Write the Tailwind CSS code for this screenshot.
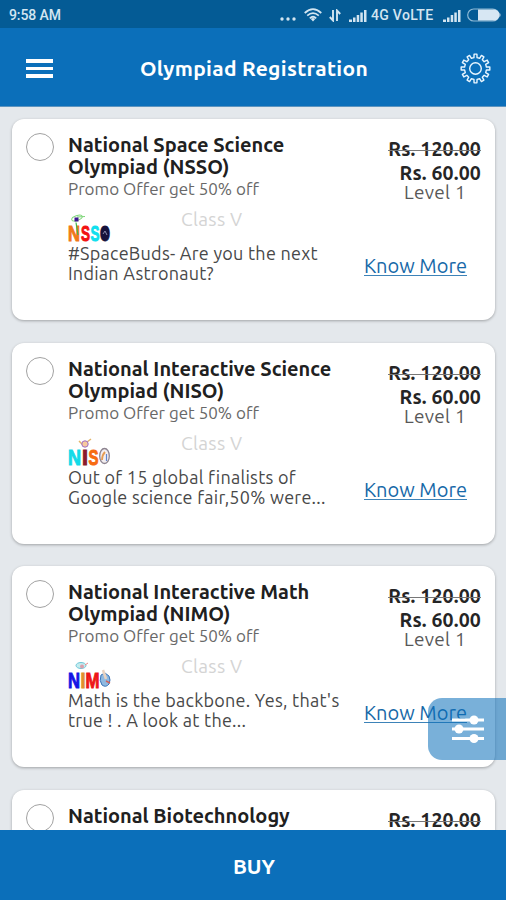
<!DOCTYPE html>
<html lang="en">
<head>
  <meta charset="UTF-8" />
  <meta name="viewport" content="width=device-width, initial-scale=1.0"/>
  <title>Olympiad Registration</title>
  <script src="https://cdn.jsdelivr.net/npm/@tailwindcss/browser@4"></script>
</head>
<body class="h-[900px] w-[506px] overflow-hidden bg-[#e4e8ec] font-['Ubuntu','Noto_Sans',sans-serif] flex flex-col">

  <!-- Status bar -->
  <div class="h-[28px] shrink-0 bg-[#045b95] text-[#d3e5f1] flex items-center justify-between pl-[9px] pr-[5px] pt-[2px] font-['Roboto',sans-serif] font-medium text-[14px]">
    <span class="tracking-[-0.1px]">9:58 AM</span>
    <div class="flex items-center">
      <svg class="w-[16px] h-[14px] mr-[8px]" viewBox="0 0 16 14" fill="currentColor">
        <circle cx="2" cy="11" r="1.7"/><circle cx="8" cy="11" r="1.7"/><circle cx="14" cy="11" r="1.7"/>
      </svg>
      <svg class="w-[18px] h-[14px] mr-[7px]" viewBox="0 0 18 14" fill="none" stroke="currentColor" stroke-width="1.7">
        <path d="M.7 5Q9-2.6 17.3 5M3.2 7.7Q9 2.4 14.8 7.7M5.8 10.3Q9 7.2 12.2 10.3"/>
        <path d="M9 13.5L6.8 11Q9 9.2 11.2 11z" fill="currentColor" stroke="none"/>
      </svg>
      <svg class="w-[12px] h-[13px] mr-[8px]" viewBox="0 0 12 13" fill="none" stroke="currentColor" stroke-width="1.9">
        <path d="M4 1V11.5L.8 8M8 12V1.5L11.2 5"/>
      </svg>
      <svg class="w-[18px] h-[13px] mr-[4px]" viewBox="0 0 18 13" fill="currentColor">
        <path d="M0 10.5h3V13H0zM4 8.5h2.5V13H4zM7.7 6h2.5v7H7.7zM11.3 3.5h2.5V13h-2.5zM15 1h2.5v12H15z"/>
      </svg>
      <span class="w-[65px] whitespace-nowrap tracking-[0.3px]">4G VoLTE</span>
      <svg class="w-[18px] h-[13px] mr-[6px] ml-[7px]" viewBox="0 0 18 13" fill="currentColor">
        <path d="M0 10.5h3V13H0zM4 8.5h2.5V13H4zM7.7 6h2.5v7H7.7zM11.3 3.5h2.5V13h-2.5zM15 1h2.5v12H15z"/>
      </svg>
      <svg class="w-[34px] h-[14px]" viewBox="0 0 34 14">
        <rect x=".7" y="1" width="31" height="12" rx="6" fill="none" stroke="#8db9d6" stroke-width="1.2"/>
        <path d="M11 1.5h16a5.5 5.5 0 0 1 0 11H11z" fill="#d7e7f3"/>
        <path d="M32.5 4.5q2 2.5 0 5z" fill="#d7e7f3"/>
      </svg>
    </div>
  </div>

  <!-- App bar -->
  <header class="h-[79px] shrink-0 bg-[#0b6fba] text-white flex items-center justify-between pl-[26px] pr-[15px] pt-[2px] border-b border-[#5d94bf]">
    <div class="w-[27px] flex flex-col gap-[4px]">
      <span class="h-[4px] bg-white"></span>
      <span class="h-[3px] bg-white"></span>
      <span class="h-[4px] bg-white"></span>
    </div>
    <h1 class="text-[21px] font-bold whitespace-nowrap tracking-[0.3px] -ml-[5px] pt-[2px]">Olympiad Registration</h1>
    <svg class="w-[31px] h-[31px]" viewBox="-15.5 -15.5 31 31" fill="none" stroke="#e9f6ff" stroke-width="1.4" stroke-linejoin="round">
      <path id="gear-teeth"/>
      <circle r="5.8"/>
    </svg>
  </header>

  <!-- Olympiad list -->
  <main id="list" class="flex-1 min-h-0 overflow-hidden pl-[12px] pr-[11px] pt-[12px] flex flex-col gap-[22.6px]"></main>

  <!-- Filter button -->
  <div class="absolute left-[428px] top-[698px] w-[78px] h-[62px] rounded-l-[14px] bg-[#0b6fba]/55">
    <svg class="absolute left-[24px] top-[17px] w-[32px] h-[29px]" viewBox="0 0 32 29" fill="white">
      <path d="M0 3.5h32v3H0zM0 12.5h32v3H0zM0 22h32v3H0z"/>
      <circle cx="22" cy="5" r="4.5"/><circle cx="7" cy="14" r="4.5"/><circle cx="22" cy="23.5" r="4.5"/>
    </svg>
  </div>

  <!-- Buy -->
  <button class="h-[70px] shrink-0 bg-[#0b6fba] text-white text-[21px] font-bold pt-[3px] pl-[2px]">BUY</button>

  <script>
    const logos = {
      nsso: `
        <g fill="none" stroke="#7fd67a" stroke-width="1"><ellipse cx="9" cy="4" rx="5.5" ry="2.4" transform="rotate(-20 9 4)"/><path d="M9 3L17 2.5"/></g>
        <text x="0" y="26.5" textLength="12" lengthAdjust="spacingAndGlyphs" fill="#f07818" stroke="#f07818">N</text>
        <text x="13" y="26.5" textLength="9" lengthAdjust="spacingAndGlyphs" fill="#f31212" stroke="#f31212">S</text>
        <text x="22.5" y="26.5" textLength="9" lengthAdjust="spacingAndGlyphs" fill="#10e0ee" stroke="#10e0ee">S</text>
        <text x="32" y="26.5" textLength="10" lengthAdjust="spacingAndGlyphs" fill="#17123c" stroke="#17123c">O</text>
        <rect x="6.5" y="3.5" width="4" height="4" fill="#3a1690"/>
        <path d="M8 8.500L10 21" stroke="#3cb54a" stroke-width="1.2"/>
        <ellipse cx="37" cy="18.5" rx="4" ry="6.5" fill="#17123c"/><path d="M35 20l2-3 2 4" stroke="#8c8cae" fill="none"/>`,
      niso: `
        <path d="M11 3l4 4 8-6" stroke="#e3b56a" stroke-width="1.5" fill="none"/>
        <text x="0" y="26.5" textLength="13" lengthAdjust="spacingAndGlyphs" fill="#12dbe8" stroke="#12dbe8">N</text>
        <text x="14" y="26.5" textLength="6" lengthAdjust="spacingAndGlyphs" fill="#8a1c2c" stroke="#8a1c2c">I</text>
        <text x="20.5" y="26.5" textLength="10" lengthAdjust="spacingAndGlyphs" fill="#f76b13" stroke="#f76b13">S</text>
        <circle cx="17" cy="6" r="3.2" fill="#f7c99c" stroke="#9c6cc8" stroke-width="1"/>
        <ellipse cx="36.5" cy="18" rx="4.8" ry="7.5" fill="#f3eef0" stroke="#8d8490" stroke-width="1.3"/>
        <path d="M34 22q0-5 3-8" stroke="#e59b52" stroke-width="1.8" fill="none"/><path d="M38.5 16v7" stroke="#5f86cf" stroke-width="1.2"/>`,
      nimo: `
        <ellipse cx="13" cy="4.5" rx="5" ry="3" fill="#c3ecee" stroke="#6cc5d8" stroke-width="1"/>
        <circle cx="14" cy="5.5" r="2" fill="#d9a0ad"/><path d="M17 4l3-2" stroke="#e88"/>
        <text x="0" y="26.5" textLength="12" lengthAdjust="spacingAndGlyphs" fill="#1414e4" stroke="#1414e4">N</text>
        <text x="12.5" y="26.5" textLength="5" lengthAdjust="spacingAndGlyphs" fill="#e0902c" stroke="#e0902c">I</text>
        <text x="17.5" y="26.5" textLength="14" lengthAdjust="spacingAndGlyphs" fill="#ee1616" stroke="#ee1616">M</text>
        <path d="M33 14q-2 6 1 10 4 3 7-1 2-4 0-8l-4-3z" fill="#8fb9e0" stroke="#3d76b8" stroke-width="1"/>
        <path d="M35 9l3 9" stroke="#e9d2c0" stroke-width="2.5"/><path d="M38 20l4 2" stroke="#d0605a" stroke-width="1.5"/>`
    };

    const olympiads = [
      { title: "National Space Science<br>Olympiad (NSSO)", logo: "nsso", text: "#SpaceBuds- Are you the next<br>Indian Astronaut?" },
      { title: "National Interactive Science<br>Olympiad (NISO)", logo: "niso", text: "Out of 15 global finalists of<br>Google science fair,50% were..." },
      { title: "National Interactive Math<br>Olympiad (NIMO)", logo: "nimo", text: "Math is the backbone. Yes, that's<br>true ! . A look at the..." }
    ];

    const price = `
      <span class="mt-[5px] text-[19.5px] leading-[23px] tracking-[0.15px] font-semibold text-[#252525] relative">Rs. 120.00<i class="absolute left-0 right-0 top-[12px] h-px bg-[#777]"></i></span>`;

    document.getElementById("list").innerHTML = olympiads.map(o => `
      <article class="h-[201px] shrink-0 bg-white rounded-[12px] shadow-[0_1px_3px_rgba(0,0,0,0.3)] flex px-[14px] pt-[14px] whitespace-nowrap">
        <span class="w-[28px] h-[28px] shrink-0 rounded-full border-[1.5px] border-[#a2a2a2]"></span>
        <div class="ml-[14px] w-[290px] pt-[1px]">
          <h2 class="text-[20px] leading-[22px] font-semibold text-[#202020]">${o.title}</h2>
          <p class="text-[17px] leading-[22px] text-[#686868]">Promo Offer get 50% off</p>
          <div class="flex h-[43px]">
            <svg class="w-[43px] h-[28px] mt-[14px] font-['Liberation_Sans',sans-serif] text-[22px] font-bold" viewBox="0 0 43 28">${logos[o.logo]}</svg>
            <span class="ml-[70px] mt-[8px] text-[19px] leading-[22px] tracking-[0.3px] text-[#d4d4d4]">Class V</span>
          </div>
          <p class="text-[18px] leading-[20px] tracking-[0.26px] text-[#484848]">${o.text}</p>
        </div>
        <div class="w-[123px] flex flex-col items-end">
          ${price}
          <span class="text-[19.5px] leading-[24px] tracking-[0.15px] font-semibold text-[#252525]">Rs. 60.00</span>
          <span class="mr-[15px] -mt-[2px] text-[19px] leading-[18px] tracking-[0.3px] text-[#585858]">Level 1</span>
          <a class="mr-[14px] mt-[55px] text-[20px] leading-[19px] text-[#1769a8] border-b-[1.5px] border-[#3d83b8]">Know More</a>
        </div>
      </article>
    `).join("") + `
      <article class="h-[41px] shrink-0 bg-white rounded-t-[12px] shadow-[0_1px_3px_rgba(0,0,0,0.3)] flex px-[14px] pt-[14px] whitespace-nowrap">
        <span class="w-[28px] h-[28px] shrink-0 rounded-full border-[1.5px] border-[#a2a2a2]"></span>
        <div class="ml-[14px] w-[290px] pt-[1px]">
          <h2 class="text-[20px] leading-[22px] font-semibold text-[#202020]">National Biotechnology</h2>
        </div>
        <div class="w-[123px] flex flex-col items-end">${price}</div>
      </article>`;

    // gear outline with 12 teeth
    const points = [];
    for (let i = 0; i < 12; i++) {
      [[-0.27, 11], [-0.19, 14.4], [0.19, 14.4], [0.27, 11]].forEach(([t, r]) => {
        const a = (i + t) * Math.PI * 2 / 12 - Math.PI / 2;
        points.push((Math.cos(a) * r).toFixed(2) + " " + (Math.sin(a) * r).toFixed(2));
      });
    }
    document.getElementById("gear-teeth").setAttribute("d", "M" + points.join("L") + "Z");
  </script>

</body>
</html>
